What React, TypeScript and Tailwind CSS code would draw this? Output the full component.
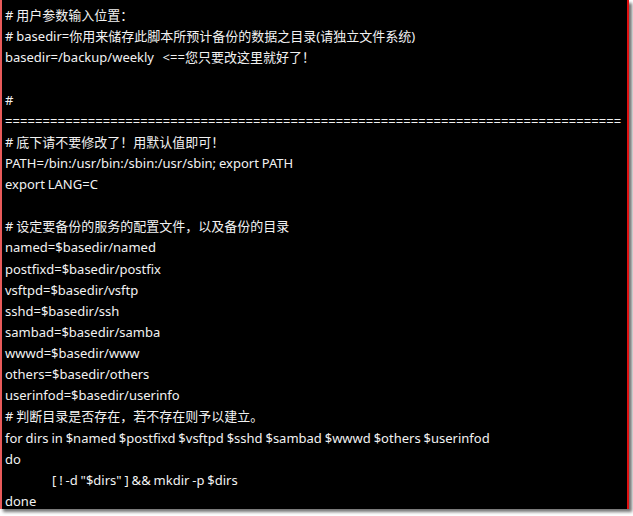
const lines: string[] = [
  "# 用户参数输入位置：",
  "# basedir=你用来储存此脚本所预计备份的数据之目录(请独立文件系统)",
  "basedir=/backup/weekly   <==您只要改这里就好了！",
  "",
  "#",
  "",
  "# 底下请不要修改了！用默认值即可！",
  "PATH=/bin:/usr/bin:/sbin:/usr/sbin; export PATH",
  "export LANG=C",
  "",
  "# 设定要备份的服务的配置文件，以及备份的目录",
  "named=$basedir/named",
  "postfixd=$basedir/postfix",
  "vsftpd=$basedir/vsftp",
  "sshd=$basedir/ssh",
  "sambad=$basedir/samba",
  "wwwd=$basedir/www",
  "others=$basedir/others",
  "userinfod=$basedir/userinfo",
  "# 判断目录是否存在，若不存在则予以建立。",
  "for dirs in $named $postfixd $vsftpd $sshd $sambad $wwwd $others $userinfod",
  "do",
  "[ ! -d \"$dirs\" ] && mkdir -p $dirs",
  "done",
];

const eqs = Array.from({ length: 82 }, (_, i) => i);

export default function App() {
  return (
    <div className="w-[633px] h-[516px] bg-white">
      <div className="w-[629px] h-[509px] bg-black border-l-2 border-l-[#e85a5a] border-r-2 border-r-[#e01010] shadow-[3px_3px_3px_rgba(0,0,0,0.55)] pl-[3px] pt-[5px] pr-[5px] overflow-hidden">
        <div className="font-['Noto_Sans','Noto_Sans_CJK_SC',sans-serif] text-[13px] leading-[21.13px] text-[#f2f2f2] whitespace-pre [word-spacing:-0.5px]">
          {lines.map((l, i) =>
            i === 5 ? (
              <div key={i} className="h-[21.13px] w-[617px] flex justify-between">
                {eqs.map((k) => (
                  <span key={k}>=</span>
                ))}
              </div>
            ) : (
              <div key={i} className={i === 22 ? "h-[21.13px] pl-[47px]" : "h-[21.13px]"}>
                {l || " "}
              </div>
            )
          )}
        </div>
      </div>
    </div>
  );
}
